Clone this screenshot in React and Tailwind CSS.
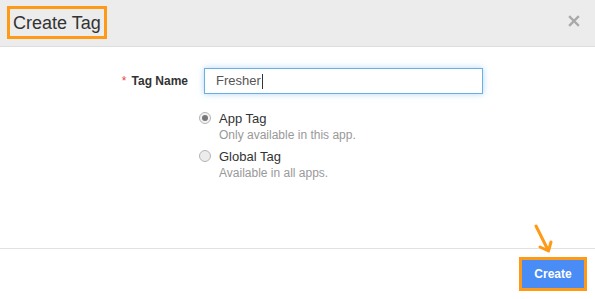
export default function App() {
  return (
    <div className="w-[595px] h-[299px] bg-white flex flex-col overflow-hidden" style={{ fontFamily: '"Liberation Sans", Arial, sans-serif' }}>
      <div className="h-[47px] shrink-0 bg-[#ececec] border-b border-[#dddddd] flex items-start justify-between pl-[7px] pr-[15px] pt-[6px]">
        <div className="h-[33px] w-[100px] border-[3px] border-[#ff9a17] flex items-center pl-[3px] text-[18px] text-[#333333] leading-none whitespace-nowrap">
          Create Tag
        </div>
        <div className="mt-[9px]">
          <svg width="12" height="12" viewBox="0 0 12 12">
            <path d="M2 2 L10 10 M10 2 L2 10" stroke="#a8a8a8" strokeWidth="2.4" strokeLinecap="square" />
          </svg>
        </div>
      </div>
      <div className="flex-1 relative">
        <div className="flex items-center mt-[21px]">
          <div className="w-[188px] text-right text-[12px] font-bold text-[#333333]">
            <span className="text-[#e8473f] font-normal mr-[5px]">*</span>Tag Name
          </div>
          <div className="ml-[16px] w-[279px] h-[26px] border border-[#66afe9] shadow-[0_0_6px_rgba(102,175,233,0.5)] flex items-center pl-[11px] text-[13px] text-[#555555]">
            Fresher<span className="inline-block w-px h-[15px] bg-[#333] ml-[1px]"></span>
          </div>
        </div>
        <div className="ml-[199px] mt-[17px] flex flex-col gap-[6px]">
          <div className="flex items-start">
            <div className="w-[12px] h-[12px] rounded-full border border-[#b5b5b5] bg-[#f3f3f3] flex items-center justify-center mt-[1px]">
              <div className="w-[6px] h-[6px] rounded-full bg-[#777777]"></div>
            </div>
            <div className="ml-[8px] leading-[16px]">
              <div className="text-[13px] text-[#333333]">App Tag</div>
              <div className="text-[12px] text-[#999999]">Only available in this app.</div>
            </div>
          </div>
          <div className="flex items-start">
            <div className="w-[12px] h-[12px] rounded-full border border-[#b5b5b5] bg-[#ececec] mt-[1px]"></div>
            <div className="ml-[8px] leading-[16px]">
              <div className="text-[13px] text-[#333333]">Global Tag</div>
              <div className="text-[12px] text-[#999999]">Available in all apps.</div>
            </div>
          </div>
        </div>
        <svg className="absolute left-[532px] top-[177px]" width="22" height="30" viewBox="0 0 22 30">
          <path d="M4 2 L16 26" stroke="#ff9a17" strokeWidth="3" strokeLinecap="round" />
          <path d="M8 23 L16.5 27 L19 18" stroke="#ff9a17" strokeWidth="3" fill="none" strokeLinecap="round" strokeLinejoin="round" />
        </svg>
      </div>
      <div className="h-[51px] shrink-0 border-t border-[#e2e2e2] flex items-start justify-end pr-[8px] pt-[8px]">
        <div className="h-[34px] w-[68px] border-[3px] border-[#ff9a17] bg-[#4a8cf5] flex items-center justify-center text-white text-[12px] font-bold">
          Create
        </div>
      </div>
    </div>
  );
}
